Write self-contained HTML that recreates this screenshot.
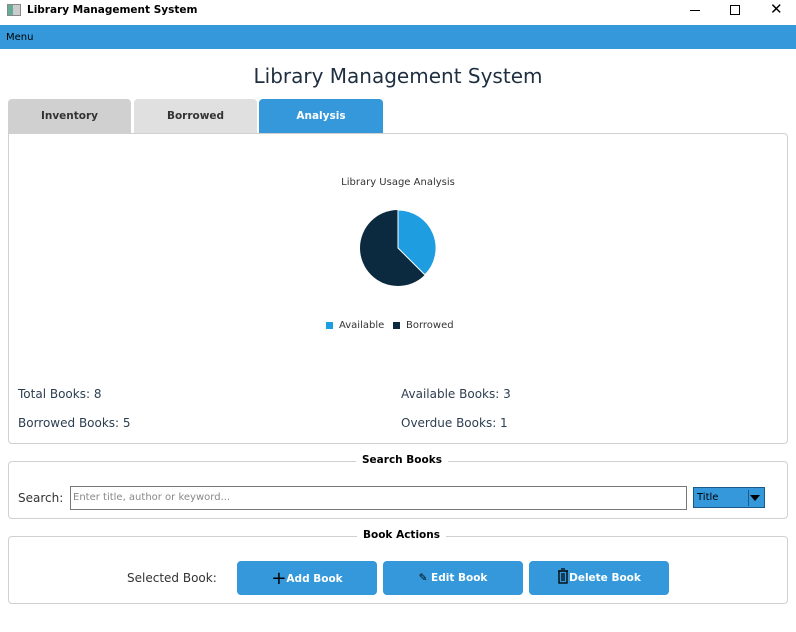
<!DOCTYPE html>
<html><head><meta charset="utf-8"><style>
*{box-sizing:border-box;margin:0;padding:0}
body{width:796px;height:632px;background:#fff;font-family:"DejaVu Sans","Liberation Sans",sans-serif;position:relative;overflow:hidden;color:#2c3e50}
.abs{position:absolute}
.t{font-size:12px}
.tab{position:absolute;top:99px;height:34px;border-radius:4px 4px 0 0;font-size:10.5px;font-weight:bold;text-align:center;line-height:35px}
.box{position:absolute;border:1px solid #d0d0d0;border-radius:4px;background:#fff}
.lg{position:absolute;font-size:10.5px;font-weight:bold;background:#fff;padding:0 6px;color:#000}
.btn{position:absolute;top:561px;height:34px;width:140px;background:#3498db;border-radius:4px;color:#fff;font-size:10.5px;font-weight:bold;text-align:center;line-height:35px}
</style></head><body>
<div class="abs" style="left:7px;top:4px;width:14px;height:12px;border:1px solid #888;background:linear-gradient(90deg,#6a9 0 40%,#ccc 40%)"></div>
<div class="abs" style="left:27px;top:4px;font-size:10.5px;font-weight:bold;color:#000">Library Management System</div>
<div class="abs" style="left:690px;top:10px;width:10px;border-top:1px solid #000"></div>
<div class="abs" style="left:730px;top:5px;width:10px;height:10px;border:1px solid #000"></div>
<div class="abs" style="left:770px;top:0px;font-size:15px;color:#000">✕</div>
<div class="abs" style="left:0;top:25px;width:796px;height:24px;background:#3498db"></div>
<div class="abs" style="left:6px;top:32px;font-size:10px;color:#000">Menu</div>
<div class="abs" style="left:0;top:64px;width:796px;text-align:center;font-size:20px;color:#1f2f40">Library Management System</div>
<div class="tab" style="left:8px;width:123px;background:#d0d0d0;color:#333">Inventory</div>
<div class="tab" style="left:134px;width:123px;background:#e0e0e0;color:#333">Borrowed</div>
<div class="tab" style="left:259px;width:124px;background:#3498db;color:#fff">Analysis</div>
<div class="box" style="left:8px;top:133px;width:780px;height:311px;border-radius:0 4px 4px 4px"></div>
<div class="abs" style="left:0;top:177px;width:796px;text-align:center;font-size:10px;color:#333">Library Usage Analysis</div>
<svg class="abs" style="left:0;top:0" width="796" height="632">
<circle cx="398" cy="248" r="38" fill="#0b2a40"/>
<path d="M398 248 L398 210 A38 38 0 0 1 424.9 274.9 Z" fill="#1e9ee0" stroke="#fff" stroke-width="1"/>
<rect x="326" y="322" width="7" height="7" fill="#1e9ee0"/>
<rect x="393" y="322" width="7" height="7" fill="#0b2a40"/>
</svg>
<div class="abs" style="left:339px;top:320px;font-size:10px;color:#333">Available</div>
<div class="abs" style="left:406px;top:320px;font-size:10px;color:#333">Borrowed</div>
<div class="abs t" style="left:18px;top:387px">Total Books: 8</div>
<div class="abs t" style="left:401px;top:387px">Available Books: 3</div>
<div class="abs t" style="left:18px;top:416px">Borrowed Books: 5</div>
<div class="abs t" style="left:401px;top:416px">Overdue Books: 1</div>
<div class="box" style="left:8px;top:461px;width:780px;height:58px"></div>
<div class="lg" style="left:356px;top:454px">Search Books</div>
<div class="abs t" style="left:18px;top:491px;color:#333">Search:</div>
<div class="abs" style="left:70px;top:486px;width:617px;height:24px;border:1px solid #777;font-size:10px;color:#888;padding:5px 2px">Enter title, author or keyword...</div>
<div class="abs" style="left:693px;top:487px;width:72px;height:21px;background:#3498db;border:1px solid #1a5a8a;font-size:10px;color:#000;padding:4px 3px">Title</div>
<div class="abs" style="left:748px;top:490px;width:15px;height:16px;background:#3498db;border-left:1px solid #1a5a8a"></div>
<div class="abs" style="left:750px;top:495px;width:0;height:0;border-left:5px solid transparent;border-right:5px solid transparent;border-top:6px solid #000"></div>
<div class="box" style="left:8px;top:536px;width:780px;height:68px"></div>
<div class="lg" style="left:357px;top:529px">Book Actions</div>
<div class="abs t" style="left:127px;top:571px;color:#333">Selected Book:</div>
<div class="btn" style="left:237px"><span style="font-size:18px;font-weight:normal;color:#000;vertical-align:-2px">+</span>Add Book</div>
<div class="btn" style="left:383px"><span style="color:#000;font-weight:normal">✎</span> Edit Book</div>
<div class="btn" style="left:529px"><svg width="12" height="16" viewBox="0 0 12 16" style="vertical-align:-3px"><rect x="2" y="3" width="8" height="12" fill="none" stroke="#000" stroke-width="1.3"/><path d="M1 3h10M4 1h4M5 5v8M7 5v8" stroke="#000" stroke-width="1.2"/></svg>Delete Book</div>
</body></html>
